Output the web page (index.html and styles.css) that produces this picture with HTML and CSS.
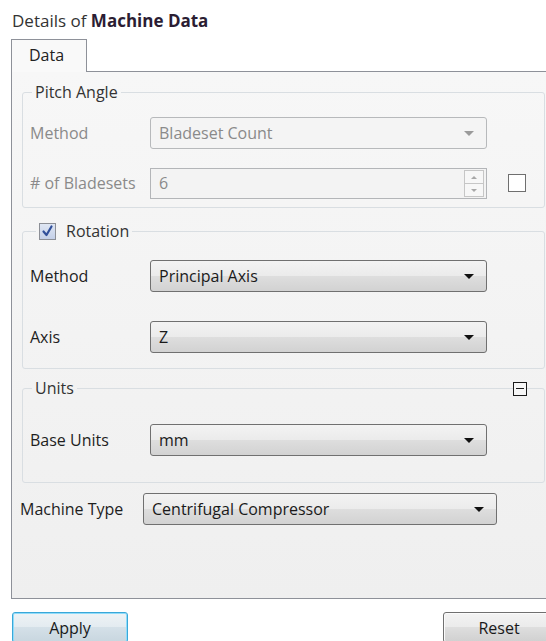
FILE: index.html
```html
<!DOCTYPE html>
<html>
<head>
<meta charset="utf-8">
<title>Details of Machine Data</title>
<link rel="stylesheet" href="styles.css">
</head>
<body>
<div class="title">Details of <b>Machine Data</b></div>

<div class="tabs">
  <div class="tab">Data</div>
</div>

<div class="panel">
  <fieldset class="group pitch">
    <legend>Pitch Angle</legend>
    <div class="row">
      <span class="label is-disabled">Method</span>
      <div class="combo is-disabled"><span>Bladeset Count</span><i class="arrow"></i></div>
    </div>
    <div class="row">
      <span class="label is-disabled"># of Bladesets</span>
      <div class="spin">
        <span>6</span>
        <div class="spin-btns"><i class="spin-up"></i><i class="spin-down"></i></div>
      </div>
      <span class="check"></span>
    </div>
  </fieldset>

  <fieldset class="group rotation">
    <legend>
      <span class="check checked">
        <svg viewBox="0 0 17 17" width="17" height="17"><path d="M4.5 8.5 L7.5 12 L12.5 3.5" fill="none" stroke="#31509a" stroke-width="2.2" stroke-linecap="round" stroke-linejoin="round"/></svg>
      </span>
      Rotation
    </legend>
    <div class="row">
      <span class="label">Method</span>
      <div class="combo"><span>Principal Axis</span><i class="arrow"></i></div>
    </div>
    <div class="row">
      <span class="label">Axis</span>
      <div class="combo"><span>Z</span><i class="arrow"></i></div>
    </div>
  </fieldset>

  <fieldset class="group units">
    <legend>Units</legend>
    <span class="collapse"></span>
    <div class="row">
      <span class="label">Base Units</span>
      <div class="combo"><span>mm</span><i class="arrow"></i></div>
    </div>
  </fieldset>

  <div class="row machine">
    <span class="label">Machine Type</span>
    <div class="combo"><span>Centrifugal Compressor</span><i class="arrow"></i></div>
  </div>
</div>

<div class="buttons">
  <button class="btn apply">Apply</button>
  <button class="btn reset">Reset</button>
</div>
</body>
</html>
```

FILE: styles.css
```css
* {
  box-sizing: border-box;
}

html,
body {
  margin: 0;
  padding: 0;
  background: #ffffff;
  overflow: hidden;
}

body {
  width: 546px;
  height: 641px;
  font-family: "Open Sans", "Noto Sans", sans-serif;
  font-size: 16px;
  color: #1e1e1e;
}

/* heading */
.title {
  padding: 10px 0 0 12px;
  height: 39px;
  line-height: 22px;
  font-size: 17px;
  color: #333333;
}

.title b {
  color: #2b1d33;
  font-weight: 700;
}

/* tab strip */
.tabs {
  display: flex;
  padding-left: 11px;
  height: 32px;
}

.tab {
  position: relative;
  z-index: 1;
  width: 76px;
  height: 33px;
  border: 1px solid #8e9199;
  border-bottom: none;
  background: #f9f9f9;
  padding-left: 17px;
  line-height: 30px;
  color: #222222;
}

/* tab page */
.panel {
  margin-left: 11px;
  margin-right: -10px;
  height: 528px;
  border: 1px solid #8e9199;
  background: linear-gradient(#f7f7f7, #efefef);
}

/* group boxes */
.group {
  position: relative;
  width: 523px;
  margin: 0 0 0 10px;
  padding: 0 0 0 7px;
  min-width: 0;
  border: 1px solid #d9dee2;
  border-radius: 3px;
}

.group legend {
  margin-left: 2px;
  padding: 0 3px;
  line-height: 18px;
  color: #333333;
}

.pitch {
  margin-top: 11px;
  padding-top: 16px;
  padding-bottom: 8px;
}

.pitch .row + .row {
  margin-top: 18px;
}

.rotation {
  margin-top: 13px;
  padding-top: 19px;
  padding-bottom: 15px;
}

.rotation legend {
  display: flex;
  align-items: center;
  gap: 10px;
  margin-left: 6px;
  line-height: 20px;
}

.rotation .row + .row {
  margin-top: 29px;
}

.units {
  margin-top: 10px;
  padding-top: 27px;
  padding-bottom: 26px;
}

.collapse {
  position: absolute;
  top: -15px;
  right: 17px;
  width: 14px;
  height: 14px;
  border: 1px solid #1a1a1a;
  background: #f6f6f6;
}

.collapse::after {
  content: "";
  position: absolute;
  left: 2px;
  right: 2px;
  top: 5px;
  height: 1px;
  background: #1a1a1a;
}

/* form rows */
.row {
  display: flex;
  align-items: center;
  height: 32px;
}

.label {
  width: 120px;
  flex: none;
}

.label.is-disabled {
  color: #8a8a8a;
}

.combo {
  display: flex;
  align-items: center;
  width: 337px;
  height: 32px;
  padding-left: 8px;
  border: 1px solid #707070;
  border-radius: 3px;
  background: linear-gradient(#f3f3f3 0%, #ebebeb 50%, #dedede 50%, #d2d2d2 100%);
  color: #1a1a1a;
}

.arrow {
  margin-left: auto;
  margin-right: 12px;
  width: 0;
  height: 0;
  border-left: 5px solid transparent;
  border-right: 5px solid transparent;
  border-top: 5px solid #111111;
}

.combo.is-disabled {
  border-color: #b7b9bb;
  background: #f4f4f4;
  color: #8a8a8a;
}

.combo.is-disabled .arrow {
  border-top-color: #9a9a9a;
}

/* spin box */
.spin {
  display: flex;
  align-items: center;
  width: 337px;
  height: 31px;
  padding-left: 8px;
  border: 1px solid #b3b5b8;
  background: #f3f3f3;
  color: #8a8a8a;
}

.spin-btns {
  display: flex;
  flex-direction: column;
  margin-left: auto;
  margin-right: 2px;
  width: 20px;
  height: 27px;
  border: 1px solid #c6c6c6;
  background: #f7f7f7;
}

.spin-btns i {
  flex: 1;
  position: relative;
}

.spin-up {
  border-bottom: 1px solid #c6c6c6;
}

.spin-btns i::after {
  content: "";
  position: absolute;
  left: 6px;
  top: 5px;
  border-left: 3px solid transparent;
  border-right: 3px solid transparent;
}

.spin-up::after {
  border-bottom: 3px solid #a8a8a8;
}

.spin-down::after {
  border-top: 3px solid #a8a8a8;
}

/* check boxes */
.check {
  display: inline-block;
  flex: none;
  width: 18px;
  height: 18px;
  margin-left: 21px;
  border: 1px solid #6f6f6f;
  background: #ffffff;
}

.check.checked {
  width: 17px;
  height: 17px;
  margin-left: 0;
  border-color: #8c8f96;
  background: linear-gradient(#dfe6f3, #c4d0e8);
}

.check svg {
  display: block;
  margin: -1px;
}

.machine {
  margin-top: 10px;
  padding-left: 8px;
}

.machine .label {
  width: 123px;
}

.machine .combo {
  width: 354px;
}

/* dialog buttons */
.buttons {
  display: flex;
  gap: 315px;
  margin-top: 13px;
  padding-left: 12px;
}

.btn {
  flex: none;
  height: 31px;
  border-radius: 3px;
  font-family: inherit;
  font-size: 16px;
  color: #1a1a1a;
  padding: 0;
}

.apply {
  width: 116px;
  border: 1px solid #3aa7d8;
  box-shadow: inset 0 0 0 1px #8fdcfa;
  background: linear-gradient(#eef3f6 0%, #e3ebf0 50%, #d4e0e8 50%, #c8d6df 100%);
}

.reset {
  width: 112px;
  border: 1px solid #707070;
  box-shadow: inset 0 0 0 1px #fbfbfb;
  background: linear-gradient(#f3f3f3 0%, #ebebeb 50%, #dedede 50%, #d0d0d0 100%);
}
```
